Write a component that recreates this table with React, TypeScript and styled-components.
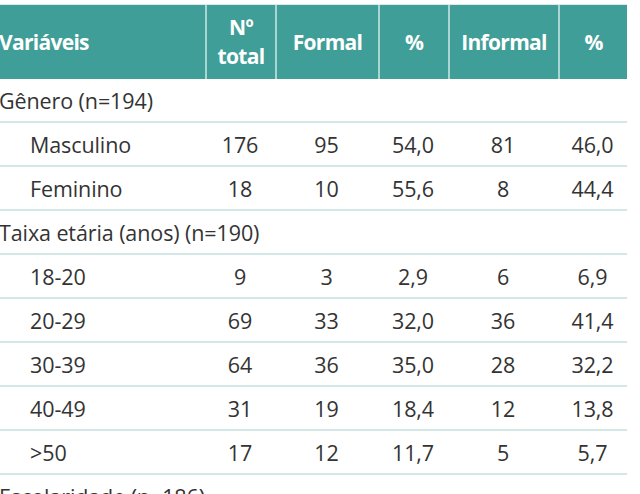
import React from "react";
import styled, { createGlobalStyle } from "styled-components";

const GlobalStyle = createGlobalStyle`
  html, body {
    margin: 0;
    padding: 0;
    background: #ffffff;
    overflow: hidden;
  }
`;

type Row = {
  label: string;
  group?: boolean;
  values?: string[];
};

const rows: Row[] = [
  { label: "Gênero (n=194)", group: true },
  { label: "Masculino", values: ["176", "95", "54,0", "81", "46,0"] },
  { label: "Feminino", values: ["18", "10", "55,6", "8", "44,4"] },
  { label: "Taixa etária (anos) (n=190)", group: true },
  { label: "18-20", values: ["9", "3", "2,9", "6", "6,9"] },
  { label: "20-29", values: ["69", "33", "32,0", "36", "41,4"] },
  { label: "30-39", values: ["64", "36", "35,0", "28", "32,2"] },
  { label: "40-49", values: ["31", "19", "18,4", "12", "13,8"] },
  { label: ">50", values: ["17", "12", "11,7", "5", "5,7"] },
  { label: "Escolaridade (n=186)", group: true },
];

const widths = [216, 70, 103, 70, 110, 69];

export default function App() {
  return (
    <>
      <GlobalStyle />
      <Page>
        <Table>
          <colgroup>
            {widths.map((w, i) => (
              <col key={i} style={{ width: w }} />
            ))}
          </colgroup>
          <thead>
            <tr>
              <HeadCell $left>Variáveis</HeadCell>
              <HeadCell>
                Nº
                <br />
                total
              </HeadCell>
              <HeadCell>Formal</HeadCell>
              <HeadCell>%</HeadCell>
              <HeadCell>Informal</HeadCell>
              <HeadCell>%</HeadCell>
            </tr>
          </thead>
          <tbody>
            {rows.map((r) =>
              r.group ? (
                <BodyRow key={r.label}>
                  <GroupCell colSpan={6}>{r.label}</GroupCell>
                </BodyRow>
              ) : (
                <BodyRow key={r.label}>
                  <LabelCell>{r.label}</LabelCell>
                  {r.values!.map((v, i) => (
                    <NumCell key={i}>{v}</NumCell>
                  ))}
                </BodyRow>
              )
            )}
          </tbody>
        </Table>
      </Page>
    </>
  );
}

const Page = styled.div`
  padding-top: 4px;
  font-family: "Open Sans", "Liberation Sans", sans-serif;
`;

const Table = styled.table`
  margin-left: -11px;
  border-collapse: separate;
  border-spacing: 0;
  table-layout: fixed;
  width: 638px;
  border-top: 1px solid #d6ecea;
`;

const HeadCell = styled.th<{ $left?: boolean }>`
  height: 74px;
  padding: 0;
  padding-left: ${(p) => (p.$left ? "10px" : "0")};
  background: #409e98;
  color: #ffffff;
  font-size: 21px;
  font-weight: 700;
  letter-spacing: -0.7px;
  line-height: 29px;
  text-align: ${(p) => (p.$left ? "left" : "center")};
  vertical-align: middle;
  border-left: ${(p) => (p.$left ? "none" : "2px solid #a9d6d2")};
`;

const BodyRow = styled.tr`
  height: 44px;
  & > td {
    border-bottom: 2px solid #d4e7e7;
    color: #333333;
    font-size: 21.5px;
    font-weight: 400;
    letter-spacing: -0.1px;
    vertical-align: middle;
    padding: 0;
    white-space: nowrap;
  }
`;

const GroupCell = styled.td`
  padding-left: 10px !important;
  text-align: left;
`;

const LabelCell = styled.td`
  padding-left: 41px !important;
  text-align: left;
`;

const NumCell = styled.td`
  text-align: center;
`;
